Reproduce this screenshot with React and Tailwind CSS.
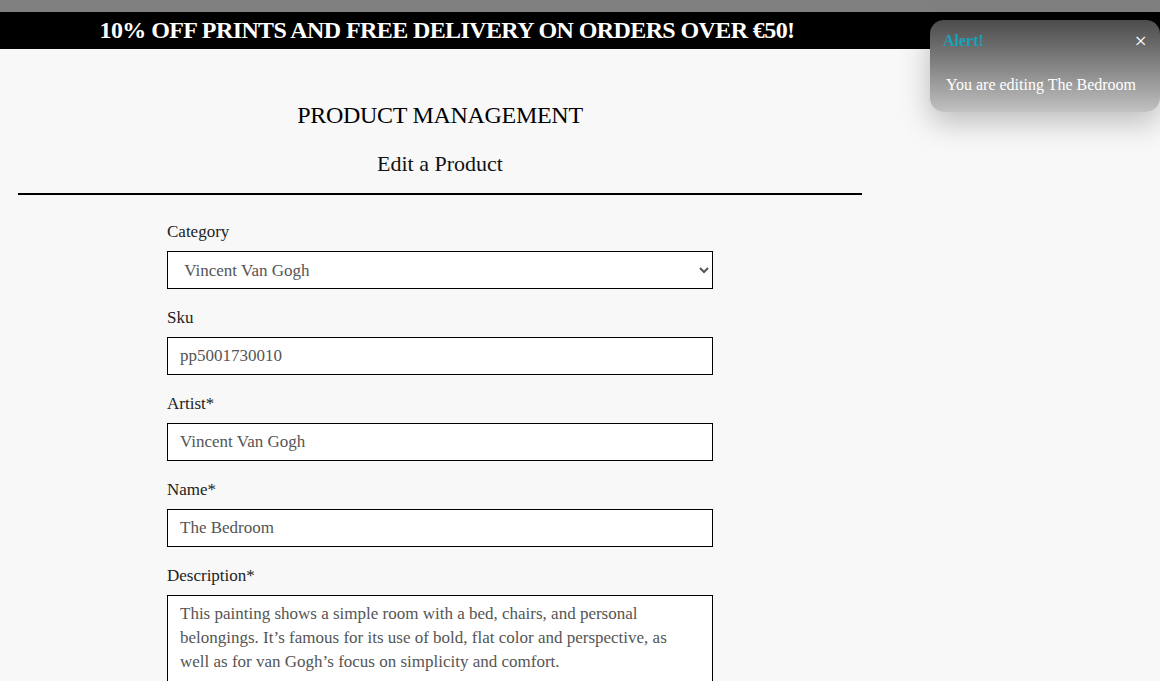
const serif = "font-['Liberation_Serif',serif]";

const Field = ({ label, children }) => (
  <div className="mb-[18px]">
    <label className="block text-[17px] text-[#222] mb-[8px] leading-[22px]">{label}</label>
    {children}
  </div>
);

const inputClass =
  "block w-full h-[38px] border border-black bg-white px-[12px] text-[17px] text-[#555] outline-none font-['Liberation_Serif',serif]";

const App = () => {
  return (
    <div className={`min-h-screen bg-[#f8f8f8] ${serif}`}>
      <div className="h-[12px] bg-[#808080]" />
      <div className="h-[37px] bg-black">
        <div className="w-[880px] pl-[14px] flex justify-center">
          <h4 className="text-white text-[24px] leading-[37px] font-semibold tracking-[-0.6px]">
            10% OFF PRINTS AND FREE DELIVERY ON ORDERS OVER €50!
          </h4>
        </div>
      </div>

      <div className="w-[880px] px-[18px]">
        <h2 className="text-center text-[24px] leading-[32px] mt-[50px] text-black tracking-[-0.3px]">PRODUCT MANAGEMENT</h2>
        <h5 className="text-center text-[22px] leading-[26px] mt-[20px] text-[#111]">Edit a Product</h5>
        <hr className="border-0 border-t-2 border-black mt-[16px]" />

        <form className="w-[546px] mx-auto mt-[26px]">
          <Field label="Category">
            <select className={`${inputClass} pl-[8px]`} defaultValue="vvg">
              <option value="vvg">&nbsp;Vincent Van Gogh</option>
            </select>
          </Field>
          <Field label="Sku">
            <input className={inputClass} defaultValue="pp5001730010" />
          </Field>
          <Field label="Artist*">
            <input className={inputClass} defaultValue="Vincent Van Gogh" />
          </Field>
          <Field label="Name*">
            <input className={inputClass} defaultValue="The Bedroom" />
          </Field>
          <Field label="Description*">
            <textarea
              rows={5}
              className="block w-full border border-black bg-white px-[12px] py-[6px] text-[17px] leading-[24px] text-[#555] outline-none resize-none font-['Liberation_Serif',serif]"
              defaultValue="This painting shows a simple room with a bed, chairs, and personal belongings. It’s famous for its use of bold, flat color and perspective, as well as for van Gogh’s focus on simplicity and comfort."
            />
          </Field>
        </form>
      </div>

      {/* Toast */}
      <div className="absolute top-[20px] left-[930px] w-[230px] h-[92px] rounded-[14px] bg-gradient-to-b from-[#4c4c4c] to-[#c2c2c2] shadow-[0_10px_30px_rgba(0,0,0,0.25)]">
        <div className="flex items-center justify-between px-[13px] pt-[9px]">
          <strong className="text-[#17a2b8] text-[16px] font-bold">Alert!</strong>
          <span className="text-white text-[22px] leading-none">×</span>
        </div>
        <p className="px-[16px] mt-[22px] text-white text-[16px] leading-[20px]">You are editing The Bedroom</p>
      </div>
    </div>
  );
};

export default App;
